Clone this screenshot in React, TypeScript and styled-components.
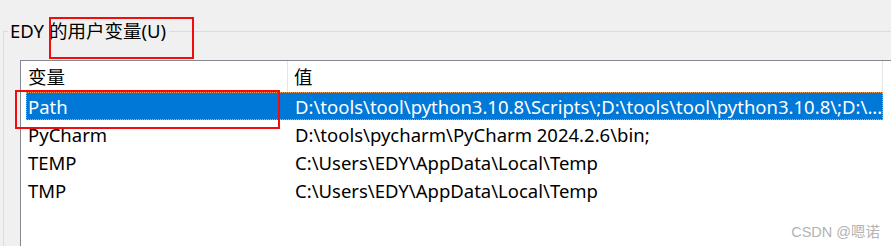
import React from 'react';
import styled, { createGlobalStyle } from 'styled-components';

const FONT = `"Noto Sans", "Noto Sans CJK SC", sans-serif`;

const GlobalStyle = createGlobalStyle`
  html, body {
    margin: 0;
    padding: 0;
    background: #f0f0f0;
  }
`;

const Page = styled.div`
  position: relative;
  width: 891px;
  height: 246px;
  overflow: hidden;
  background: #f0f0f0;
  font-family: ${FONT};
  font-size: 18.5px;
  color: #000;
`;

const GroupBox = styled.fieldset`
  margin: 19px 0 0 3px;
  padding: 0;
  border: none;
  border-top: 1px solid #dcdcdc;
  border-left: 1px solid #dcdcdc;
  min-width: 0;
  height: 260px;
`;

const GroupTitle = styled.legend`
  margin-left: 4px;
  padding: 0 3px 0 2px;
  line-height: 24px;
`;

const ListBox = styled.div`
  margin: 17px 0 0 16px;
  width: 900px;
  height: 220px;
  background: #fff;
  border: 1px solid #828790;
  padding-left: 5px;
`;

const Row = styled.div<{ $height: number; $selected?: boolean }>`
  display: flex;
  height: ${p => p.$height}px;
  width: 857px;
  box-sizing: border-box;
  align-items: center;
  background: ${p => (p.$selected ? '#0078d7' : 'transparent')};
  color: ${p => (p.$selected ? '#fff' : '#000')};
  outline: ${p => (p.$selected ? '1px dotted #f3a25a' : 'none')};
  outline-offset: -1px;
`;

const Cell = styled.div<{ $width: number; $pad: number; $divider?: boolean }>`
  flex: none;
  width: ${p => p.$width}px;
  height: 100%;
  box-sizing: border-box;
  padding-left: ${p => p.$pad}px;
  display: flex;
  align-items: center;
  white-space: nowrap;
  overflow: hidden;
  border-right: ${p => (p.$divider ? '1px solid #e5e5e5' : 'none')};
`;

const HeaderGap = styled.div`
  height: 1px;
`;

const Annotation = styled.div<{ $x: number; $y: number; $w: number; $h: number }>`
  position: absolute;
  left: ${p => p.$x}px;
  top: ${p => p.$y}px;
  width: ${p => p.$w}px;
  height: ${p => p.$h}px;
  box-sizing: border-box;
  border: 2px solid #f20c0c;
  pointer-events: none;
`;

const Watermark = styled.div`
  position: absolute;
  right: 11px;
  bottom: 5px;
  font-family: "Liberation Sans", "Noto Sans CJK SC", sans-serif;
  font-size: 14.5px;
  color: #b3b3b3;
`;

const vars = [
  {
    name: 'Path',
    value: 'D:\\tools\\tool\\python3.10.8\\Scripts\\;D:\\tools\\tool\\python3.10.8\\;D:\\...',
  },
  { name: 'PyCharm', value: 'D:\\tools\\pycharm\\PyCharm 2024.2.6\\bin;' },
  { name: 'TEMP', value: 'C:\\Users\\EDY\\AppData\\Local\\Temp' },
  { name: 'TMP', value: 'C:\\Users\\EDY\\AppData\\Local\\Temp' },
];

export default function App() {
  return (
    <>
      <GlobalStyle />
      <Page>
        <GroupBox>
          <GroupTitle>EDY 的用户变量(U)</GroupTitle>
          <ListBox>
            <Row $height={30}>
              <Cell $width={262} $pad={2} $divider>变量</Cell>
              <Cell $width={595} $pad={6} $divider>值</Cell>
            </Row>
            <HeaderGap />
            {vars.map((v, i) => (
              <Row key={v.name} $height={28} $selected={i === 0}>
                <Cell $width={262} $pad={2}>{v.name}</Cell>
                <Cell $width={595} $pad={7}>{v.value}</Cell>
              </Row>
            ))}
          </ListBox>
        </GroupBox>

        <Annotation $x={49} $y={17} $w={145} $h={42} />
        <Annotation $x={15} $y={90} $w={265} $h={39} />
        <Watermark>CSDN @嗯诺</Watermark>
      </Page>
    </>
  );
}
